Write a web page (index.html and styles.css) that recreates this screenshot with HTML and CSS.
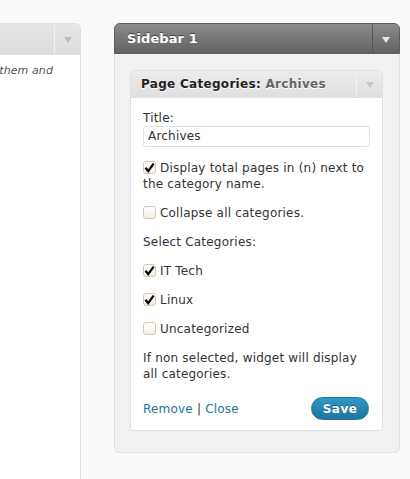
FILE: index.html
```html
<!DOCTYPE html>
<html>
<head>
<meta charset="utf-8">
<link rel="stylesheet" href="styles.css">
</head>
<body>
<div class="avail">
  <div class="avail-head">
    <div class="head-spacer"></div>
    <div class="arrow-box light"><span class="tri tri-grey"></span></div>
  </div>
  <div class="avail-body">
    <p class="desc">them and</p>
  </div>
</div>

<div class="sidebar">
  <div class="sidebar-head">
    <h3 class="sidebar-title">Sidebar 1</h3>
    <div class="arrow-box dark"><span class="tri tri-white"></span></div>
  </div>
  <div class="sidebar-body">
    <div class="widget">
      <div class="widget-head">
        <h4 class="widget-title">Page Categories: <span class="in-title">Archives</span></h4>
        <div class="arrow-box light"><span class="tri tri-pale"></span></div>
      </div>
      <div class="widget-body">
        <label class="label">Title:</label>
        <div class="input">Archives</div>

        <p class="row"><span class="cb checked"><svg viewBox="0 0 13 13"><path d="M2.5 6.8 L5.2 10.2 L10.6 2.6" fill="none" stroke="#000" stroke-width="2.2"/></svg></span>Display total pages in (n) next to the category name.</p>

        <p class="row"><span class="cb"></span>Collapse all categories.</p>

        <p class="row">Select Categories:</p>

        <p class="row"><span class="cb checked"><svg viewBox="0 0 13 13"><path d="M2.5 6.8 L5.2 10.2 L10.6 2.6" fill="none" stroke="#000" stroke-width="2.2"/></svg></span>IT Tech</p>
        <p class="row"><span class="cb checked"><svg viewBox="0 0 13 13"><path d="M2.5 6.8 L5.2 10.2 L10.6 2.6" fill="none" stroke="#000" stroke-width="2.2"/></svg></span>Linux</p>
        <p class="row"><span class="cb"></span>Uncategorized</p>

        <p class="row">If non selected, widget will display all categories.</p>

        <div class="actions">
          <div class="links"><a class="link">Remove</a> | <a class="link">Close</a></div>
          <button class="save">Save</button>
        </div>
      </div>
    </div>
  </div>
</div>
</body>
</html>
```

FILE: styles.css
```css
html, body {
  margin: 0;
  padding: 0;
}
body {
  background: #f9f9f9;
  font-family: "DejaVu Sans", sans-serif;
  font-size: 12px;
  letter-spacing: 0.2px;
  color: #333;
  display: flex;
  align-items: flex-start;
  padding-top: 23px;
  height: 479px;
  box-sizing: border-box;
  overflow: hidden;
}

/* left available widgets panel */
.avail {
  flex: none;
  width: 81px;
  height: 456px;
  box-sizing: border-box;
  background: #fff;
  border-top: 1px solid #dfdfdf;
  border-right: 1px solid #dfdfdf;
  border-top-right-radius: 6px;
  overflow: hidden;
}
.avail-head {
  display: flex;
  height: 30px;
  background: linear-gradient(#e6e6e6, #dedede);
  border-bottom: 1px solid #dfdfdf;
}
.head-spacer { flex: 1; }
.avail-body {
  display: flex;
  justify-content: flex-end;
  padding: 8px 27px 0 0;
}
.desc {
  margin: 0;
  white-space: nowrap;
  font-style: italic;
  font-size: 11px;
  letter-spacing: 0.1px;
  color: #555;
  line-height: 16px;
}

/* arrows */
.arrow-box {
  flex: none;
  width: 25px;
  display: flex;
  align-items: center;
  justify-content: center;
}
.arrow-box.light { border-left: 1px solid #f2f2f2; }
.arrow-box.dark { border-left: 1px solid #555; width: 26px; }
.tri {
  width: 0;
  height: 0;
  border-left: 4px solid transparent;
  border-right: 4px solid transparent;
  border-top: 6px solid #bbb;
  margin-top: 2px;
}
.tri-grey { border-top-color: #bdbdbd; }
.tri-pale { border-top-color: #c8c8c8; }
.tri-white { border-top-color: #e8e8e8; }

/* sidebar */
.sidebar {
  flex: none;
  margin-left: 33px;
  width: 286px;
  box-sizing: border-box;
  background: #f1f1f1;
  border: 1px solid #dfdfdf;
  border-top: 0;
  border-radius: 6px;
}
.sidebar-head {
  display: flex;
  height: 31px;
  box-sizing: border-box;
  margin: 0 -1px;
  background: linear-gradient(#8b8b8b, #626262);
  border: 1px solid #5e5e5e;
  border-radius: 6px 6px 0 0;
}
.sidebar-title {
  flex: 1;
  margin: 0;
  padding-left: 12px;
  font-size: 13px;
  font-weight: bold;
  letter-spacing: 0.1px;
  color: #fff;
  line-height: 29px;
  text-shadow: 0 -1px 0 #3f3f3f;
}
.sidebar-body {
  padding: 16px 16px 21px 15px;
}

/* widget */
.widget {
  background: #fff;
  border: 1px solid #dfdfdf;
  border-radius: 4px;
}
.widget-head {
  display: flex;
  height: 26px;
  background: linear-gradient(#ececec, #dfdfdf);
  border-bottom: 1px solid #dfdfdf;
  border-radius: 4px 4px 0 0;
}
.widget-title {
  flex: 1;
  margin: 0;
  padding-left: 10px;
  font-size: 12px;
  font-weight: bold;
  letter-spacing: 0.3px;
  color: #222;
  line-height: 26px;
  text-shadow: 0 1px 0 #fff;
}
.in-title { color: #666; }

.widget-body {
  padding: 12px 12px 10px 12px;
}
.label {
  display: block;
  line-height: 16px;
}
.input {
  height: 21px;
  box-sizing: border-box;
  border: 1px solid #dfdfdf;
  border-radius: 3px;
  padding: 0 4px;
  line-height: 19px;
  color: #333;
  background: #fff;
}
.row {
  margin: 13px 0 0;
  line-height: 16px;
}
.cb {
  display: inline-block;
  vertical-align: -2px;
  width: 13px;
  height: 13px;
  box-sizing: border-box;
  border: 1px solid #d6c8aa;
  border-radius: 3px;
  background: linear-gradient(#fff, #f4efe6);
  margin-right: 4px;
  position: relative;
}
.cb svg {
  position: absolute;
  left: -1px;
  top: -1px;
  width: 13px;
  height: 13px;
}

.actions {
  display: flex;
  justify-content: space-between;
  align-items: center;
  margin-top: 15px;
}
.link {
  color: #21759b;
  text-decoration: none;
}
.save {
  font-family: "DejaVu Sans", sans-serif;
  font-size: 12px;
  font-weight: bold;
  letter-spacing: 0.5px;
  color: #fff;
  width: 58px;
  height: 23px;
  padding: 0;
  margin-right: 1px;
  border: 1px solid #21759b;
  border-radius: 12px;
  background: linear-gradient(#2e98c8, #21759b);
  text-shadow: 0 -1px 0 rgba(0,0,0,0.3);
}
```
